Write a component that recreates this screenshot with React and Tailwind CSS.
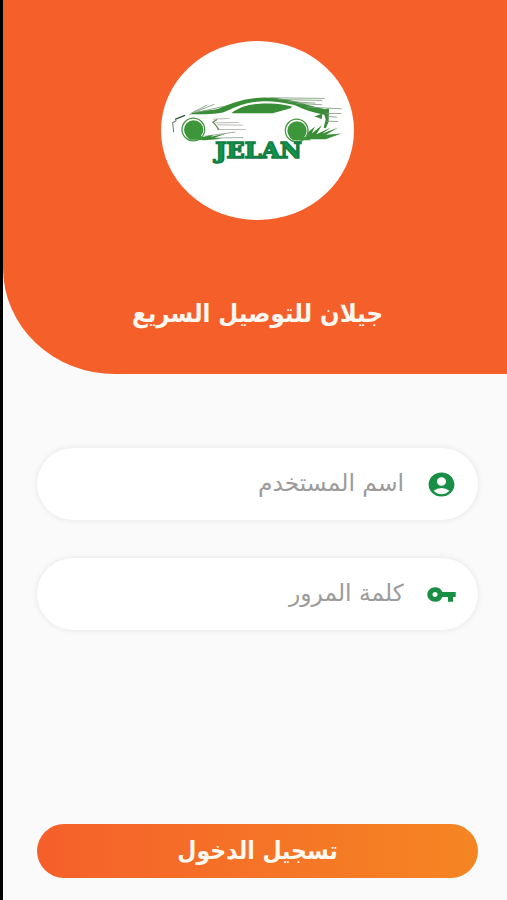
import { MdAccountCircle, MdVpnKey } from 'react-icons/md';

function Logo() {
  return (
    <svg className="w-full h-full [direction:ltr]" viewBox="18 17 579 536" preserveAspectRatio="none" fill="none">
      {/* roof line, from the bonnet to the tail */}
      <path fill="#398d37" d="M101 237 C140 222 165 227 190 220 C235 201 268 188 330 186 C375 186 415 194 465 210 L510 221 L522 218 L521 259 L512 279 L506 276 L512 252 L508 238 C475 233 448 223 418 209 C380 199 345 196 315 198 C267 200 235 219 204 231 C165 238 135 235 101 237 Z" />
      {/* window */}
      <path fill="#398d37" d="M229 233 C260 211 290 205 335 204 C370 204 397 208 411 214 C410 219 395 222 383 225 L353 233 Z" />
      <path fill="#398d37" d="M478 243 L502 234 L500 251 L490 247 Z" />
      {/* speed lines */}
      <g stroke="#7d9a7b" strokeWidth="2.5" strokeLinecap="round">
        <path d="M345 187 L508 189 M370 192 L500 195 M400 198 L480 203 M425 204 L500 208" />
        <path d="M455 215 L559 220 M515 234 L558 234 M518 243 L545 245 M515 257 L548 258" />
        <path d="M175 251 L222 249 M183 262 L250 261 M188 268 L262 269 M188 282 L272 282" stroke="#a9ada7" />
        <path d="M109 233 L156 209 M116 231 L177 207 M124 231 L205 213" />
        <path d="M150 302 L240 290 M160 308 L264 306" stroke="#8fa08e" />
      </g>
      {/* front lamp and bumper */}
      <path stroke="#31583a" strokeWidth="4" d="M60 252 L90 240" />
      <path stroke="#6d746d" strokeWidth="3" d="M64 255 L53 262 L56 290" />
      <path stroke="#6c8b55" strokeWidth="4" d="M186 252 L174 260 L182 269 L192 283" />
      {/* grass */}
      <path fill="#398d37" d="M105 312 L146 304 L162 301 L176 298 L168 304 L216 293 L178 307 L201 310 L150 314 Z" />
      <path fill="#398d37" d="M434 311 L459 290 L480 273 L470 294 L501 269 L484 296 L528 276 L501 295 L550 276 L513 298 L559 294 L512 311 Z" />
      {/* wheels */}
      <circle cx="115" cy="282" r="34" stroke="#4b9748" strokeWidth="4" fill="#fff" />
      <circle cx="116" cy="283" r="29" fill="#3d973a" />
      <path fill="#3d973a" d="M94 301 H138 L146 313 H104 Z" />
      <circle cx="425" cy="285" r="34" stroke="#4b9748" strokeWidth="4" fill="#fff" />
      <circle cx="426" cy="286" r="29" fill="#3d973a" />
      <path fill="#3d973a" d="M404 304 H447 L470 314 H414 Z" />
      <text
        x="181"
        y="368"
        textLength="259"
        lengthAdjust="spacingAndGlyphs"
        className="font-['DejaVu_Serif',serif] font-bold"
        fontSize="64"
        fill="#0b9a4c"
        stroke="#128045"
        strokeWidth="5"
      >
        JELAN
      </text>
    </svg>
  );
}

function Field({ icon: Icon, label }) {
  return (
    <label className="flex items-center h-[72px] rounded-full bg-white pr-[21px] shadow-[0_0_6px_rgba(0,0,0,0.09)]">
      <Icon className="w-[31px] h-[29px] shrink-0 text-[#188f45]" preserveAspectRatio="none" />
      <input
        type="text"
        placeholder={label}
        className="w-full min-w-0 mr-[22px] bg-transparent text-[23.4px] outline-none placeholder:text-[#9b9b9b]"
      />
    </label>
  );
}

export default function App() {
  return (
    <div
      dir="rtl"
      className="flex flex-col h-[900px] w-full border-l-[3px] border-black bg-[#fafafa] font-['DejaVu_Sans',sans-serif]"
    >
      <header className="flex flex-col items-center h-[374px] shrink-0 pt-[41px] pl-[5px] bg-[#f55f2a] rounded-bl-[112px_106px]">
        <div className="w-[193px] h-[179px] rounded-[50%] bg-white overflow-hidden">
          <Logo />
        </div>
        <h1 className="mt-[74px] font-['DejaVu_Sans_Condensed','DejaVu_Sans',sans-serif] font-stretch-semi-condensed text-[25.5px] font-bold text-[#fff8f0] whitespace-nowrap">
          جيلان للتوصيل السريع
        </h1>
      </header>

      <form className="flex flex-col flex-1 pt-[74px] pl-[34px] pr-[29px] pb-[22px]">
        <div className="flex flex-col gap-[38px]">
          <Field icon={MdAccountCircle} label="اسم المستخدم" />
          <Field icon={MdVpnKey} label="كلمة المرور" />
        </div>
        <button
          type="button"
          className="mt-auto h-[54px] rounded-full bg-linear-to-r from-[#f55f2a] to-[#f58522] font-['DejaVu_Sans_Condensed','DejaVu_Sans',sans-serif] font-stretch-semi-condensed text-[24.5px] font-bold text-[#fff8f0]"
        >
          تسجيل الدخول
        </button>
      </form>
    </div>
  );
}
